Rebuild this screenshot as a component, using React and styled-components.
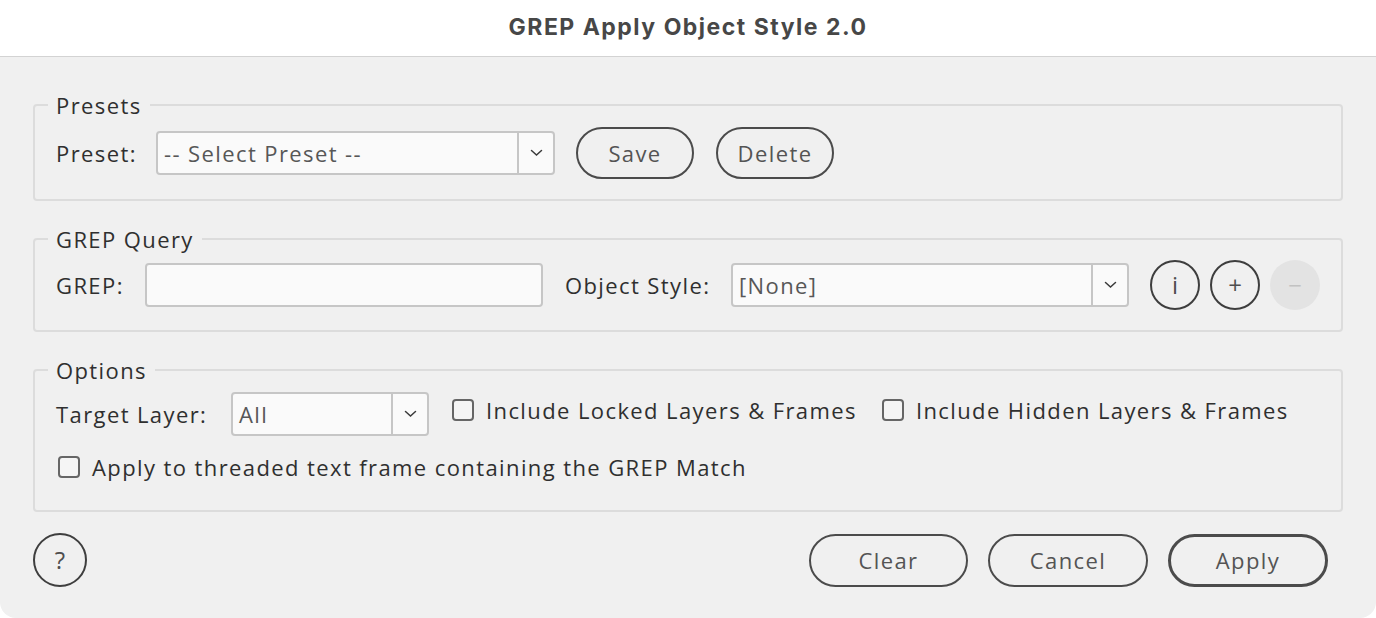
import React from 'react';
import styled, { createGlobalStyle } from 'styled-components';

const GlobalStyle = createGlobalStyle`
  html, body {
    margin: 0;
    padding: 0;
    background: #ffffff;
  }
  * {
    box-sizing: border-box;
  }
`;

const Window = styled.div`
  width: 1376px;
  height: 618px;
  display: flex;
  flex-direction: column;
  font-family: "Open Sans", "Liberation Sans", sans-serif;
  font-size: 22px;
  letter-spacing: 1.4px;
  color: #2f2f2f;
`;

const TitleBar = styled.div`
  height: 57px;
  flex-shrink: 0;
  display: flex;
  align-items: center;
  justify-content: center;
  background: #ffffff;
  border-bottom: 1px solid #d3d3d3;
  font-family: Inter, "Liberation Sans", sans-serif;
  font-weight: 700;
  font-size: 23px;
  letter-spacing: 1.5px;
  color: #474747;
  padding-bottom: 2px;
`;

const Body = styled.div`
  flex: 1;
  background: #f0f0f0;
  border-radius: 0 0 16px 16px;
  padding: 36px 33px 0 33px;
  display: flex;
  flex-direction: column;
`;

const Group = styled.fieldset`
  margin: 0 0 26px 0;
  border: 2px solid #dcdcdc;
  border-radius: 4px;
  padding: ${p => p.$pad || '10px 20px 20px 21px'};
  min-width: 0;
  display: flex;
  flex-direction: column;
  gap: ${p => p.$gap || '0px'};
`;

const Legend = styled.legend`
  padding: 0 8px;
  margin-left: -8px;
  line-height: 24px;
  font-size: 22px;
  color: #2f2f2f;
`;

const Row = styled.div`
  display: flex;
  align-items: center;
  height: ${p => p.$h || 'auto'};
`;

const Label = styled.span`
  width: ${p => p.$w}px;
  flex-shrink: 0;
  white-space: nowrap;
`;

const SelectBox = styled.div`
  width: ${p => p.$w}px;
  height: 44px;
  flex-shrink: 0;
  display: flex;
  background: #fafafa;
  border: 2px solid #c6c6c6;
  border-radius: 4px;
  color: #575757;
`;

const SelectValue = styled.div`
  flex: 1;
  display: flex;
  align-items: center;
  padding-left: 6px;
  white-space: nowrap;
  overflow: hidden;
`;

const SelectArrow = styled.div`
  width: 36px;
  flex-shrink: 0;
  display: flex;
  align-items: center;
  justify-content: center;
  border-left: 2px solid #c6c6c6;
`;

const TextInput = styled.div`
  width: ${p => p.$w}px;
  height: 44px;
  flex-shrink: 0;
  background: #fafafa;
  border: 2px solid #c6c6c6;
  border-radius: 4px;
`;

const PillButton = styled.div`
  width: ${p => p.$w}px;
  height: ${p => p.$h || 52}px;
  flex-shrink: 0;
  display: flex;
  align-items: center;
  justify-content: center;
  border: ${p => (p.$default ? '3.5px' : '2px')} solid #4b4b4b;
  border-radius: 28px;
  color: #545454;
  background: #f0f0f0;
  margin-left: ${p => p.$ml || 0}px;
`;

const RoundButton = styled.div`
  width: ${p => p.$size || 50}px;
  height: ${p => p.$size || 50}px;
  flex-shrink: 0;
  border-radius: 50%;
  display: flex;
  align-items: center;
  justify-content: center;
  border: ${p => (p.$disabled ? 'none' : '2px solid #3e3e3e')};
  background: ${p => (p.$disabled ? '#e3e3e3' : 'transparent')};
  color: ${p => (p.$disabled ? '#c2c2c2' : '#4e4e4e')};
  margin-left: ${p => p.$ml || 0}px;
  font-size: 24px;
  letter-spacing: 0;
  line-height: 1;
`;

const CheckItem = styled.label`
  display: flex;
  align-items: center;
  margin-left: ${p => p.$ml || 0}px;
  margin-bottom: ${p => p.$lift || 0}px;
`;

const Check = styled.span`
  width: 22px;
  height: 22px;
  flex-shrink: 0;
  border: 2px solid #666666;
  border-radius: 4px;
  background: #f5f5f5;
  margin-right: 12px;
`;

const CheckText = styled.span`
  white-space: nowrap;
`;

const Footer = styled.div`
  display: flex;
  align-items: center;
  padding-top: 21px;
  padding-right: 15px;
  margin-top: -26px;
`;

const Spacer = styled.div`
  flex: 1;
`;

const Chevron = () => (
  <svg width="13" height="8" viewBox="0 0 13 8">
    <path d="M1.5 1.5 L6.5 6 L11.5 1.5" fill="none" stroke="#3a3a3a" strokeWidth="1.5" strokeLinecap="round" />
  </svg>
);

const Select = ({ w, value }) => (
  <SelectBox $w={w}>
    <SelectValue>{value}</SelectValue>
    <SelectArrow>
      <Chevron />
    </SelectArrow>
  </SelectBox>
);

const CheckOption = ({ ml, lift, children }) => (
  <CheckItem $ml={ml} $lift={lift}>
    <Check />
    <CheckText>{children}</CheckText>
  </CheckItem>
);

export default function App() {
  return (
    <>
      <GlobalStyle />
      <Window>
        <TitleBar>GREP Apply Object Style 2.0</TitleBar>
        <Body>
          <Group>
            <Legend>Presets</Legend>
            <Row $h="52px">
              <Label $w={100}>Preset:</Label>
              <Select w={399} value="-- Select Preset --" />
              <PillButton $w={118} $ml={21}>Save</PillButton>
              <PillButton $w={118} $ml={22}>Delete</PillButton>
            </Row>
          </Group>

          <Group $pad="9px 20px 20px 21px">
            <Legend>GREP Query</Legend>
            <Row $h="50px">
              <Label $w={89}>GREP:</Label>
              <TextInput $w={398} />
              <Label $w={188} style={{ paddingLeft: 22 }}>Object Style:</Label>
              <Select w={398} value="[None]" />
              <RoundButton $ml={21}>i</RoundButton>
              <RoundButton $ml={10}>+</RoundButton>
              <RoundButton $ml={10} $disabled>−</RoundButton>
            </Row>
          </Group>

          <Group $pad="10px 20px 28px 21px" $gap="16px">
            <Legend>Options</Legend>
            <Row $h="44px">
              <Label $w={175}>Target Layer:</Label>
              <Select w={198} value="All" />
              <CheckOption ml={23} lift={8}>Include Locked Layers &amp; Frames</CheckOption>
              <CheckOption ml={25} lift={8}>Include Hidden Layers &amp; Frames</CheckOption>
            </Row>
            <Row $h="30px">
              <CheckOption ml={2}>Apply to threaded text frame containing the GREP Match</CheckOption>
            </Row>
          </Group>

          <Footer>
            <RoundButton $size={54}>?</RoundButton>
            <Spacer />
            <PillButton $w={159} $h={53}>Clear</PillButton>
            <PillButton $w={160} $h={53} $ml={20}>Cancel</PillButton>
            <PillButton $w={160} $h={53} $ml={20} $default>Apply</PillButton>
          </Footer>
        </Body>
      </Window>
    </>
  );
}
